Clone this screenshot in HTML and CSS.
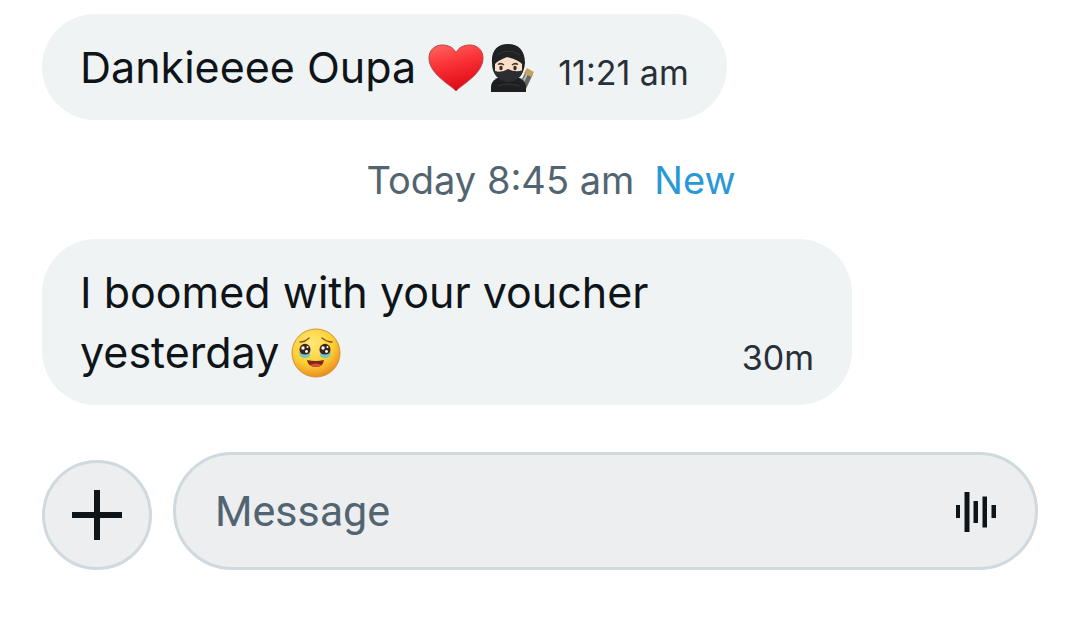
FILE: index.html
```html
<!DOCTYPE html>
<html lang="en">
<head>
    <meta charset="UTF-8">
    <meta name="viewport" content="width=device-width, initial-scale=1.0">
    <title>Messages</title>
    <link rel="stylesheet" href="styles.css">
</head>
<body>
    <main class="chat">
        <div class="bubble">
            <p class="bubble-text">Dankieeee Oupa
                <span class="emoji-pair">
                <svg class="emoji emoji-heart" viewBox="0 0 56 50" role="img" aria-label="red heart">
                    <defs>
                        <linearGradient id="heart-fill" x1="0" y1="0" x2="0.3" y2="1">
                            <stop offset="0" stop-color="#ff6862"/>
                            <stop offset="0.45" stop-color="#fb3438"/>
                            <stop offset="1" stop-color="#e00d18"/>
                        </linearGradient>
                    </defs>
                    <path d="M28 48C23 42 1 31 1 15C1 7 7 2 14 2C21 2 26 5 28 10C30 5 35 2 42 2C49 2 55 7 55 15C55 31 33 42 28 48Z" fill="url(#heart-fill)" stroke="#b94348" stroke-width="1"/>
                </svg>
                <svg class="emoji emoji-ninja" viewBox="0 0 44 50" role="img" aria-label="ninja">
                    <path d="M27 46L36 28L43 31L36 46Z" fill="#66675f"/>
                    <path d="M37 25L44 29L41 34L34 30Z" fill="#c9a05c"/>
                    <path d="M31 43L37 31" stroke="#b8bab5" stroke-width="2"/>
                    <path d="M1 49V43Q2 36 11 34H26Q35 36 36 43V49Z" fill="#1d1f21"/>
                    <path d="M18 1C7 1 1 8 2 20C2 31 8 38 18 38C29 38 34 31 35 20C35 8 29 1 18 1Z" fill="#1f2123"/>
                    <path d="M5 21Q7 18 17 14Q29 17 32 21V28Q26 31 18 30Q10 31 5 28Z" fill="#fae0ca"/>
                    <path d="M4 28Q12 30 18 26Q26 30 33 27Q31 38 18 39Q7 38 4 28Z" fill="#2b2d30"/>
                    <path d="M8 21.500Q11 19.500 14 22M22 22Q25 19.500 28 21.500" fill="none" stroke="#49342a" stroke-width="1.5"/>
                    <ellipse cx="11" cy="25" rx="1.7" ry="2.2" fill="#3c2720"/>
                    <ellipse cx="25" cy="25" rx="1.7" ry="2.2" fill="#3c2720"/>
                    <path d="M7 12Q18 4 30 12M8 43Q18 39 29 43" fill="none" stroke="#35383a"/>
                </svg>
                </span>
            </p>
            <time class="bubble-time">11:21 am</time>
        </div>

        <div class="divider">
            <time>Today 8:45 am</time>
            <span class="divider-new">New</span>
        </div>

        <div class="bubble">
            <p class="bubble-text">I boomed with your voucher yesterday
                <svg class="emoji emoji-face" viewBox="0 0 50 50" role="img" aria-label="face holding back tears">
                    <defs>
                        <radialGradient id="face-fill" cx="0.42" cy="0.3" r="0.72">
                            <stop offset="0" stop-color="#ffe879"/>
                            <stop offset="0.6" stop-color="#fed032"/>
                            <stop offset="1" stop-color="#e98a22"/>
                        </radialGradient>
                    </defs>
                    <circle cx="25" cy="25" r="24" fill="url(#face-fill)" stroke="#d69235"/>
                    <path d="M9 14Q14 14 18 10M31 10Q36 14 41 14" fill="none" stroke="#814c1b" stroke-width="1.4" stroke-linecap="round"/>
                    <path d="M8 24Q13 28 19 25Q20 30 14 30Q8 30 8 24ZM40 24Q35 28 29 25Q28 30 34 30Q40 30 40 24Z" fill="#78c7c1"/>
                    <ellipse cx="14" cy="21.500" rx="5.5" ry="5.8" fill="#39251c"/>
                    <ellipse cx="34" cy="21.500" rx="5.5" ry="5.8" fill="#39251c"/>
                    <path d="M9 25Q14 28 19 25Q17 29 14 29Q10 29 9 25ZM29 25Q34 28 39 25Q38 29 34 29Q31 29 29 25Z" fill="#78c7c1"/>
                    <g fill="#fff">
                        <circle cx="12" cy="20" r="1.7"/>
                        <circle cx="16.5" cy="19" r="1"/>
                        <circle cx="15.5" cy="23.5" r="1.4"/>
                        <circle cx="32" cy="20" r="1.7"/>
                        <circle cx="36.5" cy="19" r="1"/>
                        <circle cx="35.5" cy="23.5" r="1.4"/>
                    </g>
                    <path d="M16 32Q25 34 33 32Q32 39 25 39Q17 39 16 32Z" fill="#7c291b"/>
                    <path d="M19 37Q25 34 31 37Q28 39 25 39Q21 39 19 37Z" fill="#d94d3a"/>
                </svg>
            </p>
            <time class="bubble-time">30m</time>
        </div>

        <form class="composer">
            <button type="button" class="add-button" aria-label="Add attachment">
                <svg viewBox="0 0 50 50"><path d="M22 0h6v22h22v6H28v22h-6V28H0v-6h22z"/></svg>
            </button>
            <div class="message-field">
                <input type="text" class="message-input" placeholder="Message" aria-label="Message">
                <button type="button" class="voice-button" aria-label="Record voice message">
                    <svg viewBox="0 0 42 42"><path d="M1 15h4v13H1zM9.500 2h5v40h-5zM18.500 11h4.500v22h-4.500zM27.500 6.500h4.500v31h-4.500zM36.500 15h4.500v13h-4.500z"/></svg>
                </button>
            </div>
        </form>
    </main>
</body>
</html>
```
FILE: styles.css
```css
:root {
    --bubble: #eff3f4;
    --field: #eceef0;
    --border: #cfd9de;
    --text: #0f1419;
    --muted: #536471;
    --accent: #2898d6;
}

* {
    box-sizing: border-box;
}

body {
    margin: 0;
    background: #fff;
    color: var(--text);
    font-family: Inter, sans-serif;
}

.chat {
    display: flex;
    flex-direction: column;
    align-items: flex-start;
    padding: 14px 42px 52px;
}

.bubble {
    display: flex;
    align-items: flex-end;
    gap: 24px;
    max-width: 75vw;
    padding: 23px 38px;
    border-radius: 54px;
    background: var(--bubble);
}

.bubble-text {
    flex: 1;
    margin: 0;
    font-size: 43px;
    line-height: 60px;
}

.bubble-time {
    color: #273038;
    font-size: 34px;
    line-height: 48px;
    white-space: nowrap;
}

.emoji {
    height: 50px;
    vertical-align: -10px;
}

.emoji-pair {
    display: inline-flex;
    gap: 6px;
    vertical-align: -10px;
}

.emoji-heart {
    width: 56px;
}

.emoji-ninja {
    width: 44px;
}

.emoji-face {
    width: 50px;
}

.divider {
    display: flex;
    align-self: center;
    gap: 20px;
    padding: 30px 0 29px 22px;
    color: var(--muted);
    font-size: 38px;
    line-height: 60px;
}

.divider-new {
    color: var(--accent);
}

.composer {
    display: flex;
    align-items: flex-end;
    align-self: stretch;
    gap: 21px;
    margin-top: 47px;
}

button {
    display: flex;
    align-items: center;
    justify-content: center;
    padding: 0;
    border: none;
    background: none;
    cursor: pointer;
}

button svg {
    fill: var(--text);
}

.add-button {
    flex: none;
    width: 110px;
    height: 110px;
    border: 3px solid var(--border);
    border-radius: 50%;
    background: var(--field);
}

.add-button svg {
    width: 50px;
    height: 50px;
}

.message-field {
    display: flex;
    flex: 1;
    align-items: center;
    height: 118px;
    padding: 0 38px 0 39px;
    border: 3px solid var(--border);
    border-radius: 59px;
    background: var(--field);
}

.message-input {
    flex: 1;
    min-width: 0;
    padding: 0;
    border: none;
    outline: none;
    background: none;
    color: var(--text);
    font-family: Roboto, sans-serif;
    font-size: 43px;
}

.message-input::placeholder {
    color: var(--muted);
    opacity: 1;
}

.voice-button svg {
    width: 42px;
    height: 42px;
}
```
